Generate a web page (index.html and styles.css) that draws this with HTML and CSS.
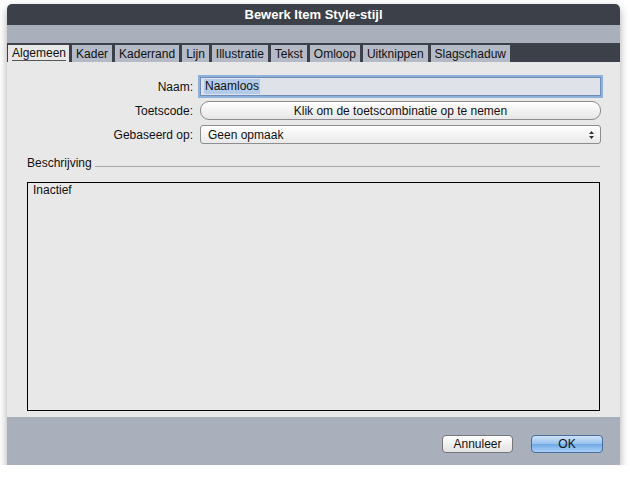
FILE: index.html
```html
<!DOCTYPE html>
<html>
<head>
<meta charset="utf-8">
<link rel="stylesheet" href="styles.css">
</head>
<body>
<div class="window">
  <div class="titlebar">Bewerk Item Style-stijl</div>
  <div class="toolbar"></div>
  <div class="tabs">
    <div class="tab active"><span>Algemeen</span></div>
    <div class="tab">Kader</div>
    <div class="tab">Kaderrand</div>
    <div class="tab">Lijn</div>
    <div class="tab">Illustratie</div>
    <div class="tab">Tekst</div>
    <div class="tab">Omloop</div>
    <div class="tab">Uitknippen</div>
    <div class="tab">Slagschaduw</div>
  </div>
  <div class="content">
    <div class="form">
      <label class="label">Naam:</label>
      <div class="input"><span class="sel">Naamloos</span></div>
      <label class="label">Toetscode:</label>
      <div class="pill">Klik om de toetscombinatie op te nemen</div>
      <label class="label">Gebaseerd op:</label>
      <div class="popup">
        <span>Geen opmaak</span>
        <svg class="arrows" width="7" height="10" viewBox="0 0 7 10"><path d="M1 4 L3.5 1 L6 4 Z M1 6 L3.5 9 L6 6 Z" fill="#333"/></svg>
      </div>
    </div>
    <div class="section">
      <span>Beschrijving</span>
      <div class="rule"></div>
    </div>
    <div class="desc">Inactief</div>
  </div>
  <div class="footer">
    <button class="btn">Annuleer</button>
    <button class="btn ok">OK</button>
  </div>
</div>
</body>
</html>
```
FILE: styles.css
```css
html, body {
  margin: 0;
  padding: 0;
  background: #ffffff;
}
body {
  padding: 4px 10px 0 7px;
  font-family: "Liberation Sans", Arial, sans-serif;
  font-size: 12px;
  color: #111;
}
.window {
  width: 613px;
  height: 461px;
  display: flex;
  flex-direction: column;
  border-radius: 5px 5px 0 0;
  overflow: hidden;
  box-shadow: 0 4px 8px rgba(0,0,0,0.35);
}
.titlebar {
  height: 21px;
  flex: none;
  background: #3c4049;
  color: #fff;
  font-family: "Liberation Sans", Arial, sans-serif;
  font-weight: bold;
  font-size: 13px;
  display: flex;
  align-items: center;
  justify-content: center;
}
.toolbar {
  height: 18px;
  flex: none;
  background: #a9b0bc;
}
.tabs {
  height: 19px;
  flex: none;
  background: #3c4049;
  display: flex;
  align-items: flex-end;
  padding-left: 1px;
  gap: 3px;
}
.tab {
  height: 17px;
  background: #b4bac6;
  padding: 0 4px;
  display: flex;
  align-items: center;
  font-size: 12px;
  color: #111;
}
.tab.active {
  background: #e8e8e8;
  padding-right: 3px;
}
.tab.active span {
  border-bottom: 1px solid #555;
  line-height: 13px;
}
.content {
  flex: 1;
  min-height: 0;
  background: #e8e8e8;
  padding: 15px 20px 6px 20px;
  display: flex;
  flex-direction: column;
}
.form {
  display: grid;
  grid-template-columns: 166px 401px;
  column-gap: 7px;
  row-gap: 5px;
  align-items: center;
}
.label {
  text-align: right;
  font-size: 12px;
}
.input {
  height: 17px;
  background: #dfe2e8;
  border: 1px solid #6f8db6;
  box-shadow: 0 0 0 2px #8eb1dc;
  display: flex;
  align-items: center;
  padding-left: 3px;
}
.sel {
  background: #b3cbe8;
  padding: 0 1px;
  line-height: 15px;
}
.pill {
  height: 17px;
  border: 1px solid #8b8b8b;
  border-radius: 9px;
  background: linear-gradient(#ffffff, #f2f2f2 50%, #e6e6e6);
  display: flex;
  align-items: center;
  justify-content: center;
}
.popup {
  height: 17px;
  border: 1px solid #8e8e8e;
  border-radius: 3px;
  background: linear-gradient(#ffffff, #f4f4f4 50%, #e9e9e9);
  display: flex;
  align-items: center;
  justify-content: space-between;
  padding: 0 5px 0 7px;
}
.arrows {
  display: block;
}
.section {
  display: flex;
  align-items: center;
  margin-top: 12px;
  gap: 3px;
}
.rule {
  flex: 1;
  height: 1px;
  margin-top: 6px;
  background: #a8a8a8;
}
.desc {
  margin-top: 12px;
  flex: 1;
  border: 1px solid #000;
  background: #e8e8e8;
  padding: 0 5px;
}
.footer {
  height: 48px;
  flex: none;
  background: #a9b0bc;
  display: flex;
  align-items: flex-start;
  justify-content: flex-end;
  gap: 18px;
  padding: 18px 17px 0 0;
  box-sizing: border-box;
}
.btn {
  font-family: "Liberation Sans", Arial, sans-serif;
  font-size: 12px;
  height: 18px;
  border: 1px solid #777;
  border-radius: 4px;
  background: linear-gradient(#ffffff, #f0f0f0 50%, #e2e2e2);
  color: #111;
  padding: 0;
  width: 71px;
}
.btn.ok {
  width: 72px;
  border-color: #4b6e9c;
  background: linear-gradient(#cfe3f8, #96c1ee 50%, #6fa8e6 51%, #a9d1f5);
}
```
